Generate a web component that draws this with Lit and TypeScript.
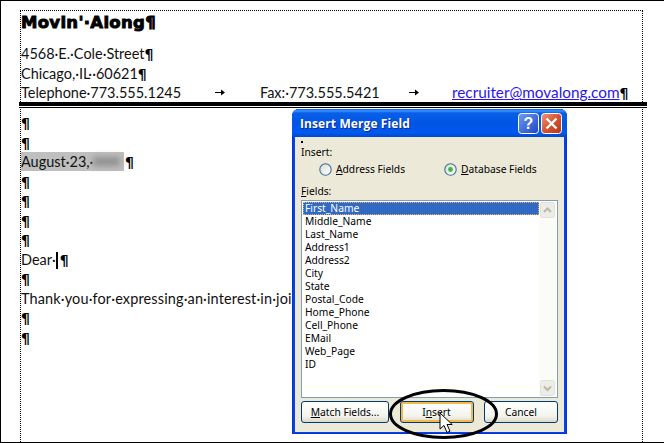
import { LitElement, html, css, svg } from "lit";
import { customElement } from "lit/decorators.js";

const FIELDS = ["Middle_Name","Last_Name","Address1","Address2","City","State","Postal_Code","Home_Phone","Cell_Phone","EMail","Web_Page","ID"];

@customElement("app-root")
export class AppRoot extends LitElement {
  static styles = css`
    :host { display: block; width: 664px; height: 443px; }
    .frame { position: relative; box-sizing: border-box; width: 664px; height: 443px; border: 1px solid #000; border-right: none; background: #fff; overflow: hidden;
      font-family: "Lato", "Liberation Sans", sans-serif; font-size: 14.47px; color: #111; padding: 9px 0 0 20px; }
    .margin-top { position: absolute; left: 19px; top: 9px; width: 623px; height: 440px; border: 1px dotted #000; border-bottom: none; box-sizing: border-box; }
    .title { height: 26px; line-height: 26px; font-family: "DejaVu Sans", sans-serif; font-weight: 700; font-size: 16.5px; letter-spacing: 0.3px; color: #000; -webkit-text-stroke: 0.9px #000; margin-bottom: 8px; }
    .line { height: 19.5px; line-height: 19.5px; white-space: nowrap; }
    .wide { letter-spacing: 0.14px; }
    .pm { color: #000; font-weight: 700; font-family: "DejaVu Sans", sans-serif; font-size: 14px; line-height: 1; }
    .tabrow { display: flex; align-items: center; }
    .tab1 { width: 194px; }
    .arrow { display: block; flex: none; }
    .a1 { margin-right: 35px; }
    .fax { width: 149px; }
    .a2 { margin-right: 33px; }
    a { color: #2a16f0; text-decoration: underline; font-size: 15.3px; }
    .rule { margin: -0.5px 22px 5px -2px; width: 628px; height: 1px; border-top: 4px solid #000; border-bottom: 1px solid #000; }
    .hl { display: inline-block; background: #bfbfbf; width: 103px; height: 19px; line-height: 19px; vertical-align: top; position: relative; margin-right: 1px; }
    .blur { position: absolute; left: 72px; top: 5px; width: 27px; height: 9px; background: #8f8f8f; filter: blur(3px); }
    .caret { display: inline-block; width: 2px; height: 17px; background: #000; vertical-align: -4px; margin: 0 2px 0 0; }

    .dlg { position: absolute; left: 291px; top: 108px; width: 275px; height: 325px; box-sizing: border-box; display: flex; flex-direction: column;
      border-radius: 7px 7px 0 0; background: #0046e0; font-family: "Noto Sans", "Liberation Sans", sans-serif; font-size: 10.25px; color: #000;
      box-shadow: inset 0 0 0 1px #0831d9; padding: 0 3px 2px 3px; }
    .tb { height: 28px; margin: 0 -3px; padding: 0 5px 0 8px; border-radius: 7px 7px 0 0; display: flex; align-items: center; gap: 2px;
      background: linear-gradient(180deg,#0a5fe8 0%,#3a93ff 7%,#0a5fe8 14%,#0055e5 50%,#0058ee 85%,#0049cc 100%); }
    .tt { flex: 1; font-family: "Open Sans", sans-serif; font-weight: 700; font-size: 12px; color: #fff; text-shadow: 1px 1px 0 #0a2a90; letter-spacing: 0.1px; }
    .tbtn { display: block; width: 21px; height: 21px; }
    .body { flex: 1; background: #ece9d8; position: relative; padding: 4px 6px 0 6px; display: flex; flex-direction: column; }
    .dot { width: 2px; height: 2px; background: #000; margin-bottom: 2px; }
    .lab { line-height: 13px; height: 13px; margin-top: 1px; }
    u { text-decoration: underline; }
    .radios { display: flex; align-items: center; height: 13px; margin-top: 4px; padding-left: 18px; }
    .radio { display: flex; align-items: center; gap: 4px; line-height: 13px; }
    .r1 { width: 125px; }
    .radio svg { display: block; }
    .fl { margin-top: 9px; }
    .list { margin-top: 2px; height: 198px; box-sizing: border-box; border: 1px solid #7f9db9; background: #fff; display: flex; padding: 1px; }
    .items { flex: 1; }
    .it { height: 13px; line-height: 13px; padding-left: 2px; white-space: nowrap; }
    .sel { background: #316ac5; color: #fff; outline: 1px dotted #e8b060; outline-offset: -1px; }
    .sb { width: 17px; background: #fbfbf7; display: flex; flex-direction: column; justify-content: space-between; align-items: center; }
    .sbb { display: block; width: 15px; height: 16px; }
    .btns { display: flex; justify-content: space-between; margin-top: 3px; }
    .b { box-sizing: border-box; height: 22px; border: 1px solid #003c74; border-radius: 3px; background: linear-gradient(180deg,#fff 0%,#f4f4ee 70%,#dcd8c8 100%); display: flex; align-items: center; justify-content: center; }
    .b1 { width: 88px; }
    .b2 { width: 74px; box-shadow: inset 0 0 0 2px #f5b84a; }
    .b3 { width: 74px; }
    .oval { position: absolute; left: 387px; top: 387px; display: block; }
    .cur { position: absolute; left: 438px; top: 411px; display: block; }
  `;

  render() {
    const pm = html`<span class="pm">¶</span>`;
    const arrow = (c: string) => html`<svg class="arrow ${c}" width="10" height="7" viewBox="0 0 10 7"><path d="M0 3h6V3h0v1H0z" fill="#000"/><path d="M6 .5L10 3.5 6 6.5z" fill="#000"/></svg>`;
    return html`<div class="frame">
      <div class="margin-top"></div>
      <div class="title">Movin'·Along¶</div>
      <div class="line">4568·E.·Cole·Street${pm}</div>
      <div class="line">Chicago,·IL··60621${pm}</div>
      <div class="line tabrow"><span class="tab1">Telephone·773.555.1245</span>${arrow("a1")}<span class="fax">Fax:·773.555.5421</span>${arrow("a2")}<a>recruiter@movalong.com</a>${pm}</div>
      <div class="rule"></div>
      <div class="line">${pm}</div>
      <div class="line">${pm}</div>
      <div class="line"><span class="hl">August·23,·<span class="blur"></span></span>${pm}</div>
      <div class="line">${pm}</div>
      <div class="line">${pm}</div>
      <div class="line">${pm}</div>
      <div class="line">${pm}</div>
      <div class="line">Dear·<span class="caret"></span>${pm}</div>
      <div class="line">${pm}</div>
      <div class="line wide">Thank·you·for·expressing·an·interest·in·joi</div>
      <div class="line">${pm}</div>
      <div class="line">${pm}</div>

      <div class="dlg">
        <div class="tb">
          <span class="tt">Insert Merge Field</span>
          <svg class="tbtn" viewBox="0 0 21 21"><defs><linearGradient id="hb" x1="0" y1="0" x2="1" y2="1"><stop offset="0" stop-color="#6f9bf2"/><stop offset="1" stop-color="#1d46c8"/></linearGradient></defs><rect x=".5" y=".5" width="20" height="20" rx="3" fill="url(#hb)" stroke="#fff"/><text x="10.5" y="16" text-anchor="middle" font-family="Liberation Sans" font-weight="700" font-size="16" fill="#fff">?</text></svg>
          <svg class="tbtn" viewBox="0 0 21 21"><defs><linearGradient id="cb" x1="0" y1="0" x2="1" y2="1"><stop offset="0" stop-color="#e99a80"/><stop offset=".5" stop-color="#d9532f"/><stop offset="1" stop-color="#b8341a"/></linearGradient></defs><rect x=".5" y=".5" width="20" height="20" rx="3" fill="url(#cb)" stroke="#fff"/><path d="M5.5 5.5l10 10M15.5 5.5l-10 10" stroke="#fff" stroke-width="2.4"/></svg>
        </div>
        <div class="body">
          <div class="dot"></div>
          <div class="lab">Insert:</div>
          <div class="radios">
            <div class="radio r1">${this.radio(false)}<span><u>A</u>ddress Fields</span></div>
            <div class="radio">${this.radio(true)}<span><u>D</u>atabase Fields</span></div>
          </div>
          <div class="lab fl"><u>F</u>ields:</div>
          <div class="list">
            <div class="items">
              <div class="it sel">First_Name</div>
              ${FIELDS.map((f) => html`<div class="it">${f}</div>`)}
            </div>
            <div class="sb">
              ${this.scrollBtn("M4 10l3.5-3.5L11 10")}
              ${this.scrollBtn("M4 6.5l3.5 3.5L11 6.5")}
            </div>
          </div>
          <div class="btns">
            <div class="b b1"><span><u>M</u>atch Fields...</span></div>
            <div class="b b2"><span>I<u>n</u>sert</span></div>
            <div class="b b3"><span>Cancel</span></div>
          </div>
        </div>
      </div>

      <svg class="oval" width="112" height="52" viewBox="0 0 112 52"><ellipse cx="55.5" cy="26" rx="53" ry="23.5" fill="none" stroke="#000" stroke-width="3"/></svg>
      <svg class="cur" width="14" height="22" viewBox="0 0 14 22"><path d="M1 1v16l4-3.5 3 7 3-1.3-3-6.7h5.2z" fill="#fff" stroke="#000" stroke-width="1"/></svg>
    </div>`;
  }

  radio(on: boolean) {
    return html`<svg width="13" height="13" viewBox="0 0 13 13"><defs><linearGradient id="rg" x1="0" y1="0" x2="1" y2="1"><stop offset="0" stop-color="#dcdcd4"/><stop offset="1" stop-color="#fff"/></linearGradient></defs><circle cx="6.5" cy="6.5" r="5.7" fill="url(#rg)" stroke="#3f6f96" stroke-width="1.1"/>${on ? svg`<circle cx="6.5" cy="6.5" r="2.4" fill="#3fb43f"/>` : ""}</svg>`;
  }

  scrollBtn(d: string) {
    return html`<svg class="sbb" viewBox="0 0 15 16"><rect x=".5" y=".5" width="14" height="15" rx="2" fill="#eeede5" stroke="#e2e1d8"/><path d="${d}" fill="none" stroke="#b8b8ae" stroke-width="2"/></svg>`;
  }
}
